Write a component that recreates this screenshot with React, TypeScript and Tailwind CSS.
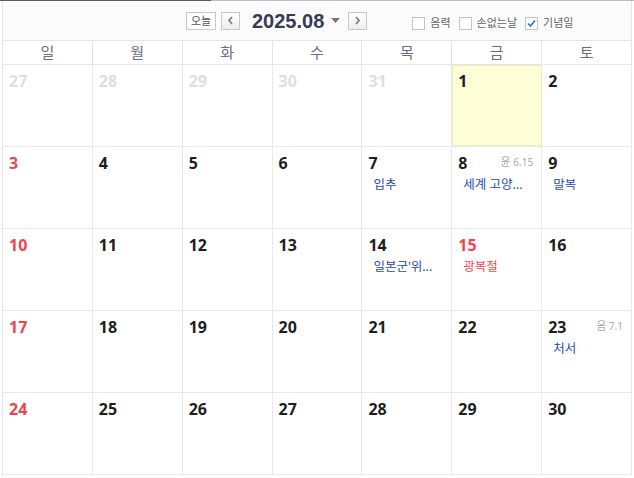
import React from "react";

type Cell = {
  d: number;
  other?: boolean;
  sun?: boolean;
  holiday?: boolean;
  today?: boolean;
  lunar?: string;
  ev?: string;
  evRed?: boolean;
};

const weeks: Cell[][] = [
  [
    { d: 27, other: true },
    { d: 28, other: true },
    { d: 29, other: true },
    { d: 30, other: true },
    { d: 31, other: true },
    { d: 1, today: true },
    { d: 2 },
  ],
  [
    { d: 3, sun: true },
    { d: 4 },
    { d: 5 },
    { d: 6 },
    { d: 7, ev: "입추" },
    { d: 8, lunar: "윤 6.15", ev: "세계 고양..." },
    { d: 9, ev: "말복" },
  ],
  [
    { d: 10, sun: true },
    { d: 11 },
    { d: 12 },
    { d: 13 },
    { d: 14, ev: "일본군'위..." },
    { d: 15, holiday: true, ev: "광복절", evRed: true },
    { d: 16 },
  ],
  [
    { d: 17, sun: true },
    { d: 18 },
    { d: 19 },
    { d: 20 },
    { d: 21 },
    { d: 22 },
    { d: 23, lunar: "음 7.1", ev: "처서" },
  ],
  [
    { d: 24, sun: true },
    { d: 25 },
    { d: 26 },
    { d: 27 },
    { d: 28 },
    { d: 29 },
    { d: 30 },
  ],
];

const days = ["일", "월", "화", "수", "목", "금", "토"];

function Check({ checked, label }: { checked?: boolean; label: string }) {
  return (
    <label className="flex items-center gap-[5px] text-[11px] text-[#666]">
      <span className="flex h-[13px] w-[13px] items-center justify-center border border-[#c4c4c4] bg-white">
        {checked && (
          <svg width="9" height="9" viewBox="0 0 9 9">
            <path d="M1 4.5 L3.5 7 L8 1.5" fill="none" stroke="#3a6fb0" strokeWidth="1.6" />
          </svg>
        )}
      </span>
      {label}
    </label>
  );
}

export default function App() {
  return (
    <div
      className="relative h-[478px] w-[634px] overflow-hidden bg-white"
      style={{ fontFamily: '"Noto Sans", "Noto Sans CJK KR", sans-serif' }}
    >
      <div className="flex h-[1px]">
        <div className="w-[211px] bg-[#4f5d6e]" />
        <div className="flex-1 bg-[#b8bcc4]" />
      </div>
      <div className="ml-[2px] mr-[2px] flex h-[39px] items-center border-x border-[#e5e5e5] bg-[#fbfbfb]">
        <div className="ml-[183px] flex h-[18px] w-[30px] items-center justify-center border border-[#c8c8c8] bg-white text-[11px] leading-none text-[#555]">
          오늘
        </div>
        <div className="ml-[5px] flex h-[18px] w-[19px] items-center justify-center border border-[#c8c8c8] bg-gradient-to-b from-white to-[#eee]">
          <svg width="7" height="9" viewBox="0 0 7 9">
            <path d="M5 1 L2 4.5 L5 8" fill="none" stroke="#777" strokeWidth="1.6" />
          </svg>
        </div>
        <div
          className="ml-[12px] text-[20px] font-bold leading-none text-[#363a55]"
          style={{ fontFamily: '"Liberation Sans", Arial, sans-serif' }}
        >
          2025.08
        </div>
        <svg className="ml-[7px]" width="9" height="6" viewBox="0 0 9 6">
          <path d="M0 0 L9 0 L4.5 5 Z" fill="#777" />
        </svg>
        <div className="ml-[8px] flex h-[18px] w-[19px] items-center justify-center border border-[#c8c8c8] bg-gradient-to-b from-white to-[#eee]">
          <svg width="7" height="9" viewBox="0 0 7 9">
            <path d="M2 1 L5 4.5 L2 8" fill="none" stroke="#777" strokeWidth="1.6" />
          </svg>
        </div>
        <div className="ml-[45px] flex items-center gap-[8px] pt-[6px]">
          <Check label="음력" />
          <Check label="손없는날" />
          <Check checked label="기념일" />
        </div>
      </div>
      <div className="ml-[2px] w-[630px] border-l border-[#e5e5e5]">
        <div className="grid h-[25px] grid-cols-7 border-y border-[#e5e5e5]">
          {days.map((d) => (
            <div
              key={d}
              className="flex items-center justify-center border-r border-[#e5e5e5] text-[15px] leading-none text-[#6a6d88]"
            >
              {d}
            </div>
          ))}
        </div>
        {weeks.map((w, i) => (
          <div key={i} className="grid h-[82px] grid-cols-7 border-b border-[#e9e9e9]">
            {w.map((c, j) => {
              const color = c.other
                ? "text-[#dedede]"
                : c.sun || c.holiday
                ? "text-[#f2444f]"
                : "text-[#1e1e1e]";
              return (
                <div
                  key={j}
                  className={`relative border-r border-[#e9e9e9] ${
                    c.today ? "bg-[#ffffd7] outline outline-1 -outline-offset-1 outline-[#ececc0]" : ""
                  }`}
                >
                  <div className="flex items-start justify-between pl-[6px] pr-[8px] pt-[5px]">
                    <span className={`text-[16px] font-bold leading-[22px] ${color}`}>{c.d}</span>
                    {c.lunar && (
                      <span className="pt-[4px] text-[10px] leading-[12px] text-[#aaa]">
                        <span className="text-[11px]">{c.lunar.split(" ")[0]}</span>{" "}
                        {c.lunar.split(" ")[1]}
                      </span>
                    )}
                  </div>
                  {c.ev && (
                    <div
                      className={`mt-[3px] pl-[11px] text-[12.5px] leading-[16px] ${
                        c.evRed ? "text-[#f2444f]" : "text-[#2a49b8]"
                      }`}
                    >
                      {c.ev}
                    </div>
                  )}
                </div>
              );
            })}
          </div>
        ))}
      </div>
    </div>
  );
}
